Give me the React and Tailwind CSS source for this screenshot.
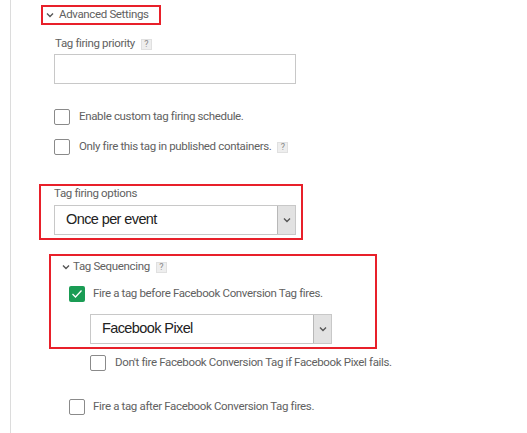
import React from "react";

const Chevron = ({ className = "" }) => (
  <svg width="8" height="6" viewBox="0 0 8 6" className={className}>
    <path d="M1 1.5 L4 4.5 L7 1.5" fill="none" stroke="#555" strokeWidth="1.4" />
  </svg>
);

const Help = () => (
  <span className="inline-flex items-center justify-center w-[11px] h-[11px] bg-[#eeeeee] border border-[#e0e0e0] text-[9px] leading-none text-[#888] ml-[6px] tracking-normal">?</span>
);

const Box = ({ checked }) =>
  checked ? (
    <span className="flex items-center justify-center w-[16px] h-[16px] rounded-[2px] bg-[#1a9c54] shrink-0">
      <svg width="12" height="10" viewBox="0 0 12 10">
        <path d="M1.5 5 L4.5 8 L10.5 1.5" fill="none" stroke="#fff" strokeWidth="1.3" />
      </svg>
    </span>
  ) : (
    <span className="block w-[16px] h-[16px] rounded-[2px] border border-[#8a8a8a] bg-white shrink-0" />
  );

const Select = ({ value }) => (
  <div className="flex w-[242px] h-[30px] border border-[#c8c8c8] bg-white">
    <div className="flex-1 flex items-center pl-[11px] text-[14.5px] tracking-[-0.6px] text-[#222] font-['Liberation_Sans',sans-serif]">{value}</div>
    <div className="w-[18px] bg-[#e2e2e2] border-l border-[#b8b8b8] flex items-center justify-center">
      <Chevron />
    </div>
  </div>
);

export default function App() {
  return (
    <div className="w-[527px] h-[433px] bg-white overflow-hidden flex font-['Roboto',sans-serif] text-[11.5px] tracking-[-0.35px] text-[#616161]">
      <div className="w-[10px] shrink-0" />
      <div className="flex-1 border-l border-[#dcdcdc] flex flex-col items-start">
        <div className="mt-[5px] ml-[30px] w-[120px] h-[20px] border-2 border-[#e8202a] flex items-center pl-[3px]">
          <Chevron />
          <span className="ml-[5px] leading-none">Advanced Settings</span>
        </div>

        <div className="mt-[12px] ml-[44px] h-[14px] flex items-center">
          <span className="leading-none">Tag firing priority</span>
          <Help />
        </div>
        <div className="mt-[3px] ml-[43px] w-[242px] h-[30px] border border-[#c8c8c8] bg-white" />

        <div className="mt-[25px] ml-[43px] flex items-center">
          <Box />
          <span className="ml-[9px] leading-none">Enable custom tag firing schedule.</span>
        </div>
        <div className="mt-[14px] ml-[43px] flex items-center">
          <Box />
          <span className="ml-[9px] leading-none">Only fire this tag in published containers.</span>
          <Help />
        </div>

        <div className="mt-[29px] ml-[28px] w-[264px] h-[56px] border-2 border-[#e8202a] pl-[13px] pt-[1px]">
          <div className="h-[13px] flex items-center leading-none">Tag firing options</div>
          <div className="mt-[5px]">
            <Select value="Once per event" />
          </div>
        </div>

        <div className="mt-[14px] ml-[38px] w-[328px] h-[95px] border-2 border-[#e8202a] flex flex-col items-start">
          <div className="mt-[4px] ml-[11px] h-[14px] flex items-center">
            <Chevron />
            <span className="ml-[3px] leading-none">Tag Sequencing</span>
            <Help />
          </div>
          <div className="mt-[12px] ml-[18px] flex items-center">
            <Box checked />
            <span className="ml-[8px] leading-none">Fire a tag before Facebook Conversion Tag fires.</span>
          </div>
          <div className="mt-[12px] ml-[39px]">
            <Select value="Facebook Pixel" />
          </div>
        </div>

        <div className="mt-[6px] ml-[79px] flex items-center">
          <Box />
          <span className="ml-[9px] leading-none">Don't fire Facebook Conversion Tag if Facebook Pixel fails.</span>
        </div>
        <div className="mt-[28px] ml-[58px] flex items-center">
          <Box />
          <span className="ml-[8px] leading-none">Fire a tag after Facebook Conversion Tag fires.</span>
        </div>
      </div>
    </div>
  );
}
